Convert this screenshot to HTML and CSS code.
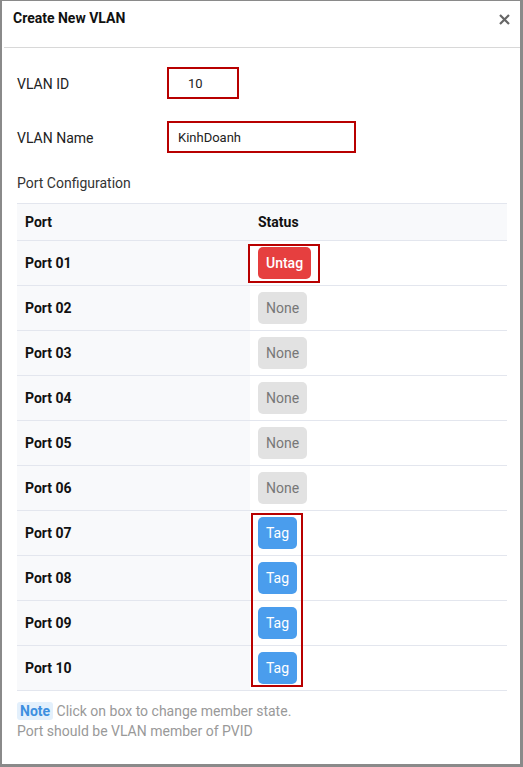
FILE: index.html
```html
<!DOCTYPE html>
<html>
<head>
<meta charset="utf-8">
<link rel="stylesheet" href="styles.css">
</head>
<body>
<div class="dialog">
  <div class="header">
    <div class="title">Create New VLAN</div>
    <svg class="close" width="11" height="11" viewBox="0 0 11 11"><path d="M1 1L10 10M10 1L1 10" stroke="#666" stroke-width="2.2"/></svg>
  </div>
  <div class="body">
    <div class="field">
      <label class="label">VLAN ID</label>
      <div class="input input-id">10</div>
    </div>
    <div class="field">
      <label class="label">VLAN Name</label>
      <div class="input input-name">KinhDoanh</div>
    </div>
    <div class="section">Port Configuration</div>
    <div class="table-wrap">
      <table class="ports">
        <thead><tr><th class="c-port">Port</th><th class="c-status">Status</th></tr></thead>
        <tbody>
          <tr><td class="c-port">Port 01</td><td class="c-status"><span class="btn untag marked">Untag</span></td></tr>
          <tr><td class="c-port">Port 02</td><td class="c-status"><span class="btn none">None</span></td></tr>
          <tr><td class="c-port">Port 03</td><td class="c-status"><span class="btn none">None</span></td></tr>
          <tr><td class="c-port">Port 04</td><td class="c-status"><span class="btn none">None</span></td></tr>
          <tr><td class="c-port">Port 05</td><td class="c-status"><span class="btn none">None</span></td></tr>
          <tr><td class="c-port">Port 06</td><td class="c-status"><span class="btn none">None</span></td></tr>
          <tr><td class="c-port">Port 07</td><td class="c-status"><span class="btn tag">Tag</span></td></tr>
          <tr><td class="c-port">Port 08</td><td class="c-status"><span class="btn tag">Tag</span></td></tr>
          <tr><td class="c-port">Port 09</td><td class="c-status"><span class="btn tag">Tag</span></td></tr>
          <tr><td class="c-port">Port 10</td><td class="c-status"><span class="btn tag">Tag</span></td></tr>
        </tbody>
      </table>
      <div class="tag-mark"></div>
    </div>
    <div class="note">
      <span class="note-badge">Note</span> Click on box to change member state.<br>Port should be VLAN member of PVID
    </div>
  </div>
</div>
</body>
</html>
```
FILE: styles.css
```css
* { box-sizing: border-box; }
html, body { margin: 0; padding: 0; background: #fff; }
body { font-family: Roboto, "Noto Sans", "Liberation Sans", sans-serif; color: #222; }
.dialog {
  width: 523px;
  height: 767px;
  border-left: 2px solid #8a8a8a;
  border-top: 1px solid #8a8a8a;
  border-right: 3px solid #8a8a8a;
  border-bottom: 3px solid #8a8a8a;
  background: #fff;
  overflow: hidden;
}
.header {
  display: flex;
  justify-content: space-between;
  align-items: flex-start;
  height: 47px;
  margin: 0 0 0 2px;
  padding: 9px 10px 0 9px;
  border-bottom: 1px solid #d8d8d8;
}
.title { font-size: 14px; font-weight: 700; color: #111; line-height: 17px; }
.close { margin-top: 4px; }
.body { padding: 19px 13px 0 15px; }
.field { display: flex; align-items: center; margin-bottom: 22px; }
.label { width: 150px; font-size: 14px; color: #222; padding-top: 1px; }
.input {
  height: 32px;
  border: 2px solid #b80000;
  font-size: 13px;
  color: #222;
  display: flex;
  align-items: center;
}
.input-id { width: 72px; padding-left: 19px; }
.input-name { width: 189px; padding-left: 9px; }
.section { font-size: 14px; color: #333; margin-top: 0; line-height: 16px; }
.table-wrap { position: relative; margin-top: 12px; }
.ports { width: 490px; border-collapse: collapse; font-size: 14px; }
.ports th, .ports td { border-top: 1px solid #e3e6ee; border-bottom: 1px solid #e3e6ee; padding: 0 8px; text-align: left; }
.ports thead tr { height: 37px; background: #f8f9fb; }
.ports th { font-weight: 700; color: #111; }
.ports tbody tr { height: 45px; }
.ports td.c-port { background: #f8f9fb; font-weight: 700; color: #111; width: 233px; }
.ports td.c-status { background: #fff; }
.btn {
  display: inline-flex;
  align-items: center;
  height: 32px;
  padding: 0 8px;
  border-radius: 5px;
  font-size: 14px;
  vertical-align: middle;
}
.untag { background: #e63f3f; color: #fff; font-weight: 500; }
.none { background: #e2e2e2; color: #777; }
.tag { background: #4a9ded; color: #fff; }
.marked { position: relative; }
.marked::after {
  content: "";
  position: absolute;
  left: -10px; right: -9px; top: -3px; bottom: -4px;
  border: 2px solid #b80000;
}
.tag-mark {
  position: absolute;
  left: 234px;
  top: 310px;
  width: 52px;
  height: 174px;
  border: 2px solid #b80000;
}
.note { margin-top: 10px; font-size: 14px; line-height: 20px; color: #999; }
.note-badge {
  display: inline-block;
  background: #e3f0fc;
  color: #3d8fe0;
  font-weight: 700;
  padding: 0 3px;
  border-radius: 3px;
  line-height: 18px;
}
```
